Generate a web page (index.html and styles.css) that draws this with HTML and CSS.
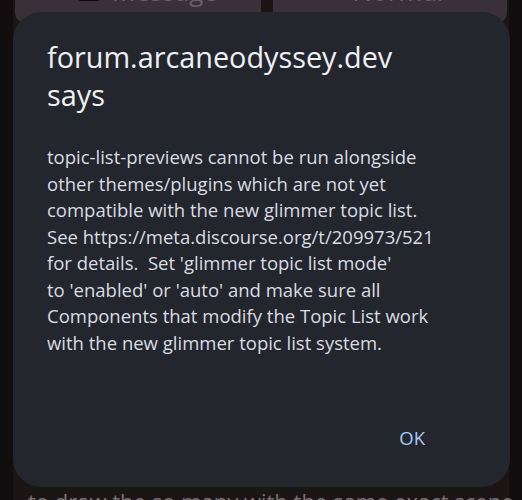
FILE: index.html
```html
<!DOCTYPE html>
<html>
<head>
<meta charset="utf-8">
<link rel="stylesheet" href="styles.css">
</head>
<body>
<div class="page">
  <div class="actions">
    <div class="act-btn">
      <span class="sq"></span>
      <span class="lbl">Message</span>
    </div>
    <div class="act-btn">
      <span class="sq small"></span>
      <span class="lbl">Normal</span>
      <span class="chev">⌄</span>
    </div>
  </div>
  <div class="behind-text">to draw the so many with the same exact scene</div>
</div>
<div class="dialog">
  <h1 class="title">forum.arcaneodyssey.dev<br>says</h1>
  <p class="msg">topic-list-previews cannot be run alongside<br>other themes/plugins which are not yet<br>compatible with the new glimmer topic list.<br>See https://meta.discourse.org/t/209973/521<br>for details.&nbsp; Set 'glimmer topic list mode'<br>to 'enabled' or 'auto' and make sure all<br>Components that modify the Topic List work<br>with the new glimmer topic list system.</p>
  <div class="buttons">
    <button class="ok">OK</button>
  </div>
</div>
</body>
</html>
```
FILE: styles.css
```css
html, body {
  margin: 0;
  padding: 0;
  background: #1a1415;
  width: 522px;
  height: 500px;
  overflow: hidden;
  font-family: "Open Sans", Roboto, sans-serif;
}
.page {
  height: 500px;
  display: flex;
  flex-direction: column;
  justify-content: space-between;
  background: linear-gradient(to right, #120d0e 0 13px, #1b1516 13px 509px, #120d0e 509px);
}
.actions {
  display: flex;
  gap: 12px;
  padding: 0 15px;
  margin-top: -41px;
}
.act-btn {
  flex: 1;
  height: 64px;
  background: #3a3037;
  border-radius: 10px;
  display: flex;
  align-items: center;
  gap: 12px;
  padding-left: 63px;
  color: #6b6067;
  font-size: 26px;
  box-sizing: border-box;
}
.act-btn + .act-btn { padding-left: 52px; }
.sq {
  width: 22px;
  height: 20px;
  background: #0f0b0c;
  border-radius: 3px;
}
.sq.small { width: 16px; height: 18px; background: #4c4248; }
.chev { margin-left: 14px; font-size: 20px; }
.behind-text {
  color: #7a7074;
  font-size: 22px;
  padding-left: 28px;
  white-space: nowrap;
  margin-bottom: -16px;
}
.dialog {
  position: absolute;
  left: 13px;
  top: 12px;
  width: 497px;
  height: 475px;
  box-sizing: border-box;
  background: #23262d;
  border-radius: 28px;
  padding: 26px 34px 0 34px;
  display: flex;
  flex-direction: column;
}
.title {
  margin: 0;
  font-weight: 400;
  font-size: 28.8px;
  line-height: 38px;
  color: #eef0f4;
  white-space: nowrap;
}
.msg {
  margin: 30px 0 0 0;
  font-size: 18.5px;
  line-height: 26.5px;
  color: #d9dce2;
  white-space: nowrap;
}
.buttons {
  margin-top: auto;
  display: flex;
  justify-content: flex-end;
  padding-bottom: 29px;
}
.ok {
  background: none;
  border: none;
  color: #a8c7fa;
  font-family: "Open Sans", Roboto, sans-serif;
  font-size: 18.5px;
  padding: 8px 51px 8px 12px;
}
```
